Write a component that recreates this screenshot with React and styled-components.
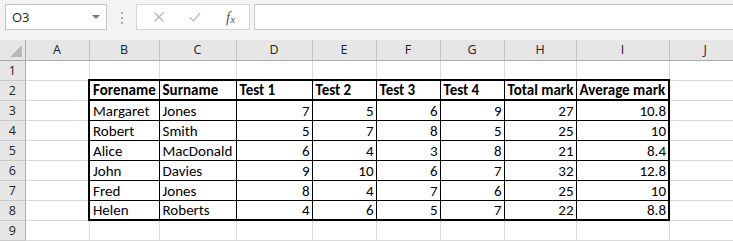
import React from "react";
import styled, { createGlobalStyle } from "styled-components";

const GlobalStyle = createGlobalStyle`
	html, body {
		margin: 0;
		padding: 0;
		background: #ffffff;
	}
	body {
		font-family: "Open Sans", "Liberation Sans", sans-serif;
	}
`;

const columns = [
	{ name: "A", width: 64 },
	{ name: "B", width: 70 },
	{ name: "C", width: 77 },
	{ name: "D", width: 76 },
	{ name: "E", width: 64 },
	{ name: "F", width: 64 },
	{ name: "G", width: 64 },
	{ name: "H", width: 72 },
	{ name: "I", width: 93 },
	{ name: "J", width: 72 },
];

const headings = ["Forename", "Surname", "Test 1", "Test 2", "Test 3", "Test 4", "Total mark", "Average mark"];

const students = [
	["Margaret", "Jones", 7, 5, 6, 9, 27, 10.8],
	["Robert", "Smith", 5, 7, 8, 5, 25, 10],
	["Alice", "MacDonald", 6, 4, 3, 8, 21, 8.4],
	["John", "Davies", 9, 10, 6, 7, 32, 12.8],
	["Fred", "Jones", 8, 4, 7, 6, 25, 10],
	["Helen", "Roberts", 4, 6, 5, 7, 22, 8.8],
];

const App = () => {
	const lastRow = students.length - 1;
	return (
		<>
			<GlobalStyle />
			<Page>
				<FormulaBar>
					<NameBox>
						<span>O3</span>
						<Caret />
					</NameBox>
					<Grip>
						<i />
						<i />
						<i />
					</Grip>
					<ActionBox>
						<ActionIcon viewBox="0 0 12 12">
							<path d="M1.5 1.5 L10.5 10.5 M10.5 1.5 L1.5 10.5" stroke="#b4b4b4" strokeWidth="1.3" fill="none" />
						</ActionIcon>
						<ActionIcon viewBox="0 0 14 12">
							<path d="M1 6.5 L5 10.5 L13 1.5" stroke="#b4b4b4" strokeWidth="1.4" fill="none" />
						</ActionIcon>
						<Fx>
							f<span>x</span>
						</Fx>
					</ActionBox>
					<FormulaInput />
				</FormulaBar>

				<Sheet>
					<colgroup>
						<col style={{ width: 25 }} />
						{columns.map((c) => (
							<col key={c.name} style={{ width: c.width }} />
						))}
					</colgroup>
					<thead>
						<tr>
							<Corner>
								<CornerMark />
							</Corner>
							{columns.map((c) => (
								<ColHead key={c.name}>{c.name}</ColHead>
							))}
						</tr>
					</thead>
					<tbody>
						<tr>
							<RowHead>1</RowHead>
							{columns.map((c) => (
								<Cell key={c.name} />
							))}
						</tr>
						<tr>
							<RowHead>2</RowHead>
							<Cell />
							{headings.map((h, i) => (
								<Cell
									key={h}
									$table
									$bold
									$top
									$bottom
									$left={i === 0}
									$right={i === headings.length - 1}
								>
									{h}
								</Cell>
							))}
							<Cell />
						</tr>
						{students.map((row, r) => (
							<tr key={r}>
								<RowHead>{r + 3}</RowHead>
								<Cell />
								{row.map((v, i) => (
									<Cell
										key={i}
										$table
										$num={typeof v === "number"}
										$left={i === 0}
										$right={i === row.length - 1}
										$bottom={r === lastRow}
									>
										{v}
									</Cell>
								))}
								<Cell />
							</tr>
						))}
						<tr>
							<RowHead>9</RowHead>
							{columns.map((c) => (
								<Cell key={c.name} />
							))}
						</tr>
					</tbody>
				</Sheet>
			</Page>
		</>
	);
};

export default App;

const Page = styled.div`
	width: 733px;
	height: 241px;
	overflow: hidden;
	background: #ffffff;
`;

const FormulaBar = styled.div`
	display: flex;
	align-items: flex-start;
	height: 40px;
	padding: 4px 0 0 5px;
	box-sizing: border-box;
	background: #f3f3f3;
`;

const NameBox = styled.div`
	display: flex;
	align-items: center;
	justify-content: space-between;
	width: 102px;
	height: 26px;
	box-sizing: border-box;
	padding: 0 6px 0 6px;
	background: #ffffff;
	border: 1px solid #c6c6c6;
	font-size: 13px;
	color: #222;
`;

const Caret = styled.span`
	width: 0;
	height: 0;
	border-left: 4px solid transparent;
	border-right: 4px solid transparent;
	border-top: 4px solid #777;
`;

const Grip = styled.div`
	display: flex;
	flex-direction: column;
	gap: 3px;
	margin: 8px 13px 0 14px;
	i {
		display: block;
		width: 2px;
		height: 2px;
		background: #a8a8a8;
	}
`;

const ActionBox = styled.div`
	display: flex;
	align-items: center;
	width: 114px;
	height: 26px;
	box-sizing: border-box;
	padding-left: 16px;
	background: #ffffff;
	border: 1px solid #d4d4d4;
`;

const ActionIcon = styled.svg`
	width: 12px;
	height: 12px;
	margin-right: 24px;
`;

const Fx = styled.span`
	font-family: "Liberation Serif", serif;
	font-style: italic;
	font-size: 15px;
	color: #555;
	margin-left: 1px;
	span {
		font-size: 11px;
		position: relative;
		top: 1px;
	}
`;

const FormulaInput = styled.div`
	flex: 1;
	height: 26px;
	margin-left: 4px;
	box-sizing: border-box;
	background: #ffffff;
	border: 1px solid #c6c6c6;
	border-right: none;
`;

const Sheet = styled.table`
	border-collapse: collapse;
	table-layout: fixed;
	width: 741px;
	font-family: Calibri, Carlito, Lato, sans-serif;
	td, th {
		height: 20px;
		padding: 0;
		box-sizing: border-box;
	}
`;

const Corner = styled.th`
	position: relative;
	background: #e6e6e6;
	border-right: 1px solid #ababab;
	border-bottom: 1px solid #ababab;
`;

const CornerMark = styled.span`
	position: absolute;
	right: 3px;
	bottom: 3px;
	width: 0;
	height: 0;
	border-left: 12px solid transparent;
	border-bottom: 12px solid #b7b7b7;
`;

const ColHead = styled.th`
	background: #e6e6e6;
	border-left: 1px solid #c2c2c2;
	border-bottom: 1px solid #ababab;
	font-family: "Open Sans", "Liberation Sans", sans-serif;
	font-weight: 400;
	font-size: 12.5px;
	color: #222;
	text-align: center;
`;

const RowHead = styled.td`
	background: #e6e6e6;
	border-right: 1px solid #ababab;
	border-bottom: 1px solid #c9c9c9;
	font-family: "Open Sans", "Liberation Sans", sans-serif;
	font-size: 12.5px;
	color: #222;
	text-align: center;
`;

const Cell = styled.td`
	border: 1px solid ${(p) => (p.$table ? "#000" : "#dadada")};
	${(p) => p.$top && "border-top: 2px solid #000;"}
	${(p) => p.$bottom && "border-bottom: 2px solid #000;"}
	${(p) => p.$left && "border-left: 2px solid #000;"}
	${(p) => p.$right && "border-right: 2px solid #000;"}
	padding: 0 2px 0 3px !important;
	font-size: 15px;
	font-weight: ${(p) => (p.$bold ? 700 : 400)};
	text-align: ${(p) => (p.$num ? "right" : "left")};
	vertical-align: bottom;
	line-height: 18px;
	color: #000;
	white-space: nowrap;
	overflow: hidden;
`;
